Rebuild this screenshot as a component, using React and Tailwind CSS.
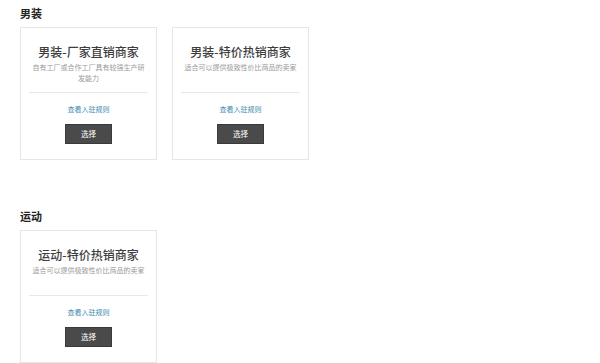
import React from "react";

const font = { fontFamily: '"Noto Sans CJK SC", "Noto Sans", sans-serif' };

function Card({ title, desc }) {
  return (
    <div className="w-[137px] h-[133px] border border-[#e6e6e6] bg-white flex flex-col items-center pt-[16px]">
      <div className="text-[12px] leading-[16px] text-[#3d3d3d] font-medium whitespace-nowrap">{title}</div>
      <div className="mt-[2px] h-[26px] px-[9px] text-[7px] leading-[10.5px] text-[#9a9a9a] text-center">{desc}</div>
      <div className="mt-[4px] self-stretch mx-[8px] h-px bg-[#e8e8e8]" />
      <div className="mt-[11px] text-[7px] leading-[10px] text-[#3e8bb0]">查看入驻规则</div>
      <div className="mt-[10px] w-[47px] h-[20px] bg-[#4a4a4a] border border-[#3a3a3a] flex items-center justify-center text-white text-[7.5px]">
        选择
      </div>
    </div>
  );
}

export default function App() {
  return (
    <div className="w-[600px] h-[363px] bg-white overflow-hidden pl-[20px]" style={font}>
      <div className="pt-[6px] text-[11px] leading-[14px] font-bold text-[#222]">男装</div>
      <div className="mt-[7px] flex gap-[15px]">
        <Card title="男装-厂家直销商家" desc="自有工厂或合作工厂具有较强生产研发能力" />
        <Card title="男装-特价热销商家" desc="适合可以提供极致性价比商品的卖家" />
      </div>
      <div className="mt-[49px] text-[11px] leading-[14px] font-bold text-[#222]">运动</div>
      <div className="mt-[7px] flex gap-[15px]">
        <Card title="运动-特价热销商家" desc="适合可以提供极致性价比商品的卖家" />
      </div>
    </div>
  );
}
